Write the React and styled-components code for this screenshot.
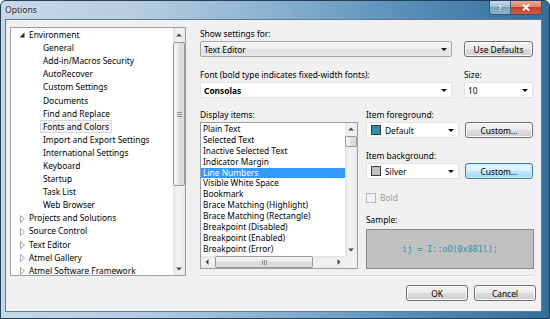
import React from 'react';
import styled, { createGlobalStyle } from 'styled-components';

const GlobalStyle = createGlobalStyle`
  html, body {
    margin: 0;
    padding: 0;
    background: #ffffff;
  }
  body {
    font-family: "Noto Sans", "Liberation Sans", sans-serif;
    font-size: 8.4px;
    color: #000;
  }
  * {
    box-sizing: border-box;
  }
`;

const Window = styled.div`
  width: 550px;
  height: 319px;
  display: flex;
  flex-direction: column;
  border: 1px solid #243f57;
  border-radius: 6px 6px 0 0;
  overflow: hidden;
  background: linear-gradient(90deg, #c6d8e7 0%, #b6cde0 25%, #86aecd 52%, #4f89b4 78%, #336f9b 100%);
`;

const TitleBar = styled.div`
  height: 18px;
  display: flex;
  align-items: flex-start;
  padding-left: 4px;
`;

const TitleText = styled.div`
  margin-top: 3px;
  line-height: 12px;
  font-size: 8.6px;
  color: #1b2733;
  text-shadow: 0 0 4px rgba(255, 255, 255, 0.9);
`;

const CaptionButtons = styled.div`
  margin-left: auto;
  margin-right: 7px;
  display: flex;
  height: 14px;
  border: 1px solid #3b5369;
  border-top: none;
  border-radius: 0 0 4px 4px;
  overflow: hidden;
`;

const CaptionButton = styled.div`
  width: ${(p) => p.$w}px;
  height: 100%;
  display: flex;
  align-items: center;
  justify-content: center;
  color: #fff;
  font-weight: bold;
  font-size: 8px;
  text-shadow: 0 0 2px rgba(0, 0, 0, 0.6);
  background: ${(p) =>
    p.$close
      ? 'linear-gradient(#e9aa98 0%, #d9836d 45%, #c4412b 50%, #d35a40 100%)'
      : 'linear-gradient(#c8dae8 0%, #a2bfd7 45%, #7aa1c2 50%, #8fb4d1 100%)'};
  & + & {
    border-left: 1px solid #4a5f73;
  }
`;

const Client = styled.div`
  flex: 1;
  margin: 0 7px 6px 4px;
  border: 1px solid #5d7b95;
  background: #f0f0f0;
  padding: 7px 0 0 4px;
  display: flex;
  gap: 14px;
`;

/* ---------- tree ---------- */

const Tree = styled.div`
  width: 176px;
  height: 249px;
  border: 1px solid #9a9ea5;
  background: #fff;
  display: flex;
`;

const TreeBody = styled.div`
  flex: 1;
  overflow: hidden;
`;

const TreeRow = styled.div`
  height: 13.1px;
  display: flex;
  align-items: center;
  padding-left: ${(p) => 8 + p.$level * 14}px;
  white-space: nowrap;
`;

const Expander = styled.span`
  width: 10px;
  height: 10px;
  display: flex;
  align-items: center;
  flex: none;
`;

const TreeLabel = styled.span`
  line-height: 11px;
  padding: 0 2px;
  margin-left: -3px;
  border: 1px solid ${(p) => (p.$selected ? '#d6d6d6' : 'transparent')};
  background: ${(p) => (p.$selected ? '#f3f3f3' : 'transparent')};
`;

/* ---------- scrollbars ---------- */

const VScroll = styled.div`
  width: 12px;
  display: flex;
  flex-direction: column;
  background: linear-gradient(90deg, #e1e1e1 0%, #f1f1f1 25%, #f1f1f1 75%, #e6e6e6 100%);
`;

const HScroll = styled.div`
  height: 12px;
  display: flex;
  background: linear-gradient(#e1e1e1 0%, #f1f1f1 25%, #f1f1f1 75%, #e6e6e6 100%);
`;

const ArrowBox = styled.div`
  flex: none;
  width: 12px;
  height: ${(p) => p.$h || 12}px;
  display: flex;
  align-items: center;
  justify-content: center;
`;

const Track = styled.div`
  flex: 1;
  display: flex;
  flex-direction: ${(p) => (p.$horizontal ? 'row' : 'column')};
  align-items: stretch;
`;

const Thumb = styled.div`
  flex: none;
  border: 1px solid #979797;
  border-radius: 2px;
  display: flex;
  align-items: center;
  justify-content: center;
  background: ${(p) =>
    p.$horizontal
      ? 'linear-gradient(#f5f5f5 0%, #e8e8e8 50%, #d9d9d9 51%, #dedede 100%)'
      : 'linear-gradient(90deg, #f5f5f5 0%, #e8e8e8 50%, #d9d9d9 51%, #dedede 100%)'};
`;

const Grip = styled.div`
  width: 5px;
  height: 5px;
  background: ${(p) =>
    p.$horizontal
      ? 'repeating-linear-gradient(90deg, #6f6f6f 0 1px, transparent 1px 2px)'
      : 'repeating-linear-gradient(#6f6f6f 0 1px, transparent 1px 2px)'};
  opacity: 0.7;
`;

const Tri = ({ dir }) => {
  const paths = {
    up: 'M0 3.5 L3 0.5 L6 3.5 Z',
    down: 'M0 0.5 L6 0.5 L3 3.5 Z',
    left: 'M3.5 0 L0.5 3 L3.5 6 Z',
    right: 'M0.5 0 L3.5 3 L0.5 6 Z',
  };
  const horiz = dir === 'left' || dir === 'right';
  return (
    <svg width={horiz ? 4 : 6} height={horiz ? 6 : 4} viewBox={horiz ? '0 0 4 6' : '0 0 6 4'}>
      <path d={paths[dir]} fill="#4a4a4a" />
    </svg>
  );
};

const VerticalScrollBar = ({ arrow, thumbTop, thumbSize }) => (
  <VScroll>
    <ArrowBox $h={arrow}>
      <Tri dir="up" />
    </ArrowBox>
    <Track>
      <Thumb style={{ marginTop: thumbTop, height: thumbSize }}>
        {thumbSize > 30 && <Grip />}
      </Thumb>
    </Track>
    <ArrowBox $h={arrow}>
      <Tri dir="down" />
    </ArrowBox>
  </VScroll>
);

/* ---------- right-hand settings ---------- */

const Settings = styled.div`
  width: 336px;
  display: flex;
  flex-direction: column;
`;

const Label = styled.div`
  height: 12px;
  line-height: 12px;
  margin-top: ${(p) => p.$mt || 0}px;
  white-space: nowrap;
  color: ${(p) => (p.$disabled ? '#a0a0a0' : '#000')};
`;

const Row = styled.div`
  display: flex;
  align-items: flex-start;
  gap: ${(p) => p.$gap || 0}px;
  margin-top: ${(p) => p.$mt || 0}px;
`;

const Combo = styled.div`
  width: ${(p) => p.$w}px;
  height: 16px;
  display: flex;
  align-items: center;
  padding: 0 4px 0 3px;
  white-space: nowrap;
  font-weight: ${(p) => (p.$bold ? 'bold' : 'normal')};
  border: 1px solid ${(p) => (p.$flat ? '#e2e2e2' : '#a8a8a8')};
  border-radius: ${(p) => (p.$flat ? 0 : 2)}px;
  background: ${(p) => (p.$flat ? '#ffffff' : 'linear-gradient(#f6f6f6 0%, #ececec 50%, #e2e2e2 51%, #e6e6e6 100%)')};
`;

const DropArrow = styled.span`
  margin-left: auto;
  width: 0;
  height: 0;
  border-left: 3px solid transparent;
  border-right: 3px solid transparent;
  border-top: 3px solid #111;
`;

const Swatch = styled.span`
  width: 10px;
  height: 10px;
  margin: 0 4px 0 1px;
  border: 1px solid #3c3c3c;
  background: ${(p) => p.$color};
  flex: none;
`;

const Button = styled.div`
  width: ${(p) => p.$w}px;
  height: 16px;
  display: flex;
  align-items: center;
  justify-content: center;
  white-space: nowrap;
  border: 1px solid ${(p) => (p.$focused ? '#3c7fb1' : '#707070')};
  border-radius: 3px;
  box-shadow: inset 0 0 0 1px ${(p) => (p.$focused ? '#c9e8f8' : '#fbfbfb')};
  background: ${(p) =>
    p.$focused
      ? 'linear-gradient(#eaf6fd 0%, #d9f0fc 50%, #bee6fd 51%, #a7d9f5 100%)'
      : 'linear-gradient(#f2f2f2 0%, #ebebeb 50%, #dddddd 51%, #cfcfcf 100%)'};
`;

const Lower = styled.div`
  display: flex;
  margin-top: 11px;
  gap: 8px;
`;

const ListColumn = styled.div`
  width: 158px;
  display: flex;
  flex-direction: column;
`;

const List = styled.div`
  margin-top: 1px;
  height: 147px;
  border: 1px solid #9a9ea5;
  background: #fff;
  display: grid;
  grid-template-columns: 1fr 12px;
  grid-template-rows: 1fr 12px;
`;

const Items = styled.div`
  overflow: hidden;
  padding-top: 1px;
`;

const Item = styled.div`
  height: 10.9px;
  line-height: 10.9px;
  padding-left: 2px;
  white-space: nowrap;
  background: ${(p) => (p.$selected ? '#3399ff' : 'transparent')};
  color: ${(p) => (p.$selected ? '#fff' : '#000')};
`;

const Corner = styled.div`
  background: #f0f0f0;
`;

const ItemColumn = styled.div`
  width: 168px;
  display: flex;
  flex-direction: column;
`;

const CheckRow = styled.div`
  display: flex;
  align-items: center;
  height: 12px;
  margin-top: 13px;
  gap: 4px;
`;

const CheckBox = styled.span`
  width: 10px;
  height: 10px;
  border: 1px solid #b9b9b9;
  background: #f4f4f4;
`;

const Sample = styled.div`
  margin-top: 3px;
  height: 40px;
  border: 1px solid #8a8a8a;
  background: #c0c0c0;
  display: flex;
  align-items: center;
  justify-content: center;
  font-family: "DejaVu Sans Mono", "Liberation Mono", monospace;
  font-size: 8.4px;
  color: #2b91af;
  white-space: pre;
`;

const Separator = styled.div`
  margin-top: 6px;
  width: 333px;
  height: 2px;
  border-top: 1px solid #d5d5d5;
  border-bottom: 1px solid #ffffff;
`;

const Footer = styled.div`
  display: flex;
  justify-content: flex-end;
  gap: 6px;
  margin-top: 8px;
`;

const treeItems = [
  { label: 'Environment', level: 0, state: 'open' },
  { label: 'General', level: 1 },
  { label: 'Add-in/Macros Security', level: 1 },
  { label: 'AutoRecover', level: 1 },
  { label: 'Custom Settings', level: 1 },
  { label: 'Documents', level: 1 },
  { label: 'Find and Replace', level: 1 },
  { label: 'Fonts and Colors', level: 1, selected: true },
  { label: 'Import and Export Settings', level: 1 },
  { label: 'International Settings', level: 1 },
  { label: 'Keyboard', level: 1 },
  { label: 'Startup', level: 1 },
  { label: 'Task List', level: 1 },
  { label: 'Web Browser', level: 1 },
  { label: 'Projects and Solutions', level: 0, state: 'closed' },
  { label: 'Source Control', level: 0, state: 'closed' },
  { label: 'Text Editor', level: 0, state: 'closed' },
  { label: 'Atmel Gallery', level: 0, state: 'closed' },
  { label: 'Atmel Software Framework', level: 0, state: 'closed' },
];

const displayItems = [
  'Plain Text',
  'Selected Text',
  'Inactive Selected Text',
  'Indicator Margin',
  'Line Numbers',
  'Visible White Space',
  'Bookmark',
  'Brace Matching (Highlight)',
  'Brace Matching (Rectangle)',
  'Breakpoint (Disabled)',
  'Breakpoint (Enabled)',
  'Breakpoint (Error)',
];

const ExpandIcon = ({ state }) => {
  if (state === 'open') {
    return (
      <svg width="6" height="6" viewBox="0 0 6 6" style={{ marginTop: 1 }}>
        <path d="M5.5 0.5 L5.5 5.5 L0.5 5.5 Z" fill="#262626" />
      </svg>
    );
  }
  if (state === 'closed') {
    return (
      <svg width="6" height="8" viewBox="0 0 6 8" style={{ marginLeft: 1, marginTop: 2 }}>
        <path d="M0.5 0.5 L4.5 4 L0.5 7.5 Z" fill="none" stroke="#a5a5a5" strokeWidth="1" />
      </svg>
    );
  }
  return null;
};

const CloseGlyph = () => (
  <svg width="8" height="7" viewBox="0 0 8 7">
    <path d="M1 0.5 L7 6.5 M7 0.5 L1 6.5" stroke="#fff" strokeWidth="1.8" />
  </svg>
);

const App = () => (
  <>
    <GlobalStyle />
    <Window>
      <TitleBar>
        <TitleText>Options</TitleText>
        <CaptionButtons>
          <CaptionButton $w={20}>?</CaptionButton>
          <CaptionButton $w={31} $close>
            <CloseGlyph />
          </CaptionButton>
        </CaptionButtons>
      </TitleBar>
      <Client>
        <Tree>
          <TreeBody>
            {treeItems.map((item) => (
              <TreeRow key={item.label} $level={item.level}>
                <Expander>
                  <ExpandIcon state={item.state} />
                </Expander>
                <TreeLabel $selected={item.selected}>{item.label}</TreeLabel>
              </TreeRow>
            ))}
          </TreeBody>
          <VerticalScrollBar arrow={13} thumbTop={1} thumbSize={144} />
        </Tree>

        <Settings>
          <Label $mt={1}>Show settings for:</Label>
          <Row $mt={1} $gap={12}>
            <Combo $w={252}>
              Text Editor
              <DropArrow />
            </Combo>
            <Button $w={69}>Use Defaults</Button>
          </Row>

          <Row $mt={12} $gap={12}>
            <Label style={{ width: 252 }}>Font (bold type indicates fixed-width fonts):</Label>
            <Label>Size:</Label>
          </Row>
          <Row $mt={1} $gap={12}>
            <Combo $w={252} $flat $bold>
              Consolas
              <DropArrow />
            </Combo>
            <Combo $w={69} $flat>
              10
              <DropArrow />
            </Combo>
          </Row>

          <Lower>
            <ListColumn>
              <Label>Display items:</Label>
              <List>
                <Items>
                  {displayItems.map((name) => (
                    <Item key={name} $selected={name === 'Line Numbers'}>
                      {name}
                    </Item>
                  ))}
                </Items>
                <VerticalScrollBar arrow={12} thumbTop={1} thumbSize={11} />
                <HScroll>
                  <ArrowBox>
                    <Tri dir="left" />
                  </ArrowBox>
                  <Track $horizontal>
                    <Thumb $horizontal style={{ marginLeft: 2, width: 98 }}>
                      <Grip $horizontal />
                    </Thumb>
                  </Track>
                  <ArrowBox>
                    <Tri dir="right" />
                  </ArrowBox>
                </HScroll>
                <Corner />
              </List>
            </ListColumn>

            <ItemColumn>
              <Label>Item foreground:</Label>
              <Row $mt={1} $gap={6}>
                <Combo $w={93} $flat>
                  <Swatch $color="#2b91af" />
                  Default
                  <DropArrow />
                </Combo>
                <Button $w={68}>Custom...</Button>
              </Row>
              <Label $mt={12}>Item background:</Label>
              <Row $mt={1} $gap={6}>
                <Combo $w={93} $flat>
                  <Swatch $color="#c0c0c0" />
                  Silver
                  <DropArrow />
                </Combo>
                <Button $w={68} $focused>
                  Custom...
                </Button>
              </Row>
              <CheckRow>
                <CheckBox />
                <Label $disabled>Bold</Label>
              </CheckRow>
              <Label $mt={10}>Sample:</Label>
              <Sample>ij = I::oO(0x881l);</Sample>
            </ItemColumn>
          </Lower>

          <Separator />
          <Footer>
            <Button $w={62}>OK</Button>
            <Button $w={62}>Cancel</Button>
          </Footer>
        </Settings>
      </Client>
    </Window>
  </>
);

export default App;
